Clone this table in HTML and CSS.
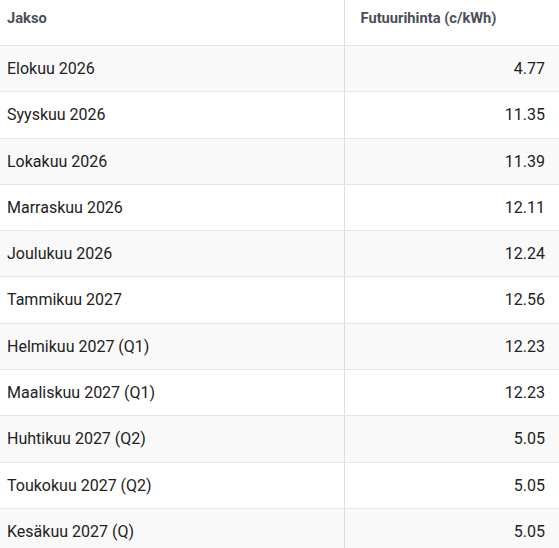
FILE: index.html
```html
<!DOCTYPE html>
<html lang="fi">
<head>
  <meta charset="UTF-8" />
  <title>Sähkön futuurihinnat</title>
  <link rel="stylesheet" href="styles.css">
</head>
<body>

  <!-- Futures price table -->
  <table class="price-table">
    <thead>
      <tr>
        <th class="col-period">Jakso</th>
        <th class="col-price">Futuurihinta (c/kWh)</th>
      </tr>
    </thead>
    <tbody>
      <tr><td>Elokuu 2026</td><td class="num">4.77</td></tr>
      <tr><td>Syyskuu 2026</td><td class="num">11.35</td></tr>
      <tr><td>Lokakuu 2026</td><td class="num">11.39</td></tr>
      <tr><td>Marraskuu 2026</td><td class="num">12.11</td></tr>
      <tr><td>Joulukuu 2026</td><td class="num">12.24</td></tr>
      <tr><td>Tammikuu 2027</td><td class="num">12.56</td></tr>
      <tr><td>Helmikuu 2027 (Q1)</td><td class="num">12.23</td></tr>
      <tr><td>Maaliskuu 2027 (Q1)</td><td class="num">12.23</td></tr>
      <tr><td>Huhtikuu 2027 (Q2)</td><td class="num">5.05</td></tr>
      <tr><td>Toukokuu 2027 (Q2)</td><td class="num">5.05</td></tr>
      <tr><td>Kesäkuu 2027 (Q)</td><td class="num">5.05</td></tr>
    </tbody>
  </table>

</body>
</html>
```

FILE: styles.css
```css
* {
  box-sizing: border-box;
}

body {
  margin: 0;
  font-family: Roboto, 'Liberation Sans', sans-serif;
  background: white;
  color: #222;
  overflow: hidden;
}

.price-table {
  width: 559px;
  border-collapse: collapse;
}

.price-table th {
  font-size: 14.7px;
  font-weight: bold;
  color: #4b4f5a;
  text-align: left;
  line-height: 20px;
  padding: 8px 16px 17px 7px;
  border-bottom: 1px solid #e2e2e2;
  background: white;
}

.price-table th.col-period {
  width: 344px;
}

.price-table th.col-price {
  padding-left: 16px;
}

.price-table td {
  font-size: 16px;
  line-height: 21.3px;
  padding: 12px 14px 12px 7px;
  border-bottom: 1px solid #e6e6e6;
}

.price-table th + th,
.price-table td + td {
  border-left: 1px solid #dedede;
}

.price-table td.num {
  text-align: right;
}

.price-table tbody tr:nth-child(odd) {
  background: #f9f9f9;
}
```
